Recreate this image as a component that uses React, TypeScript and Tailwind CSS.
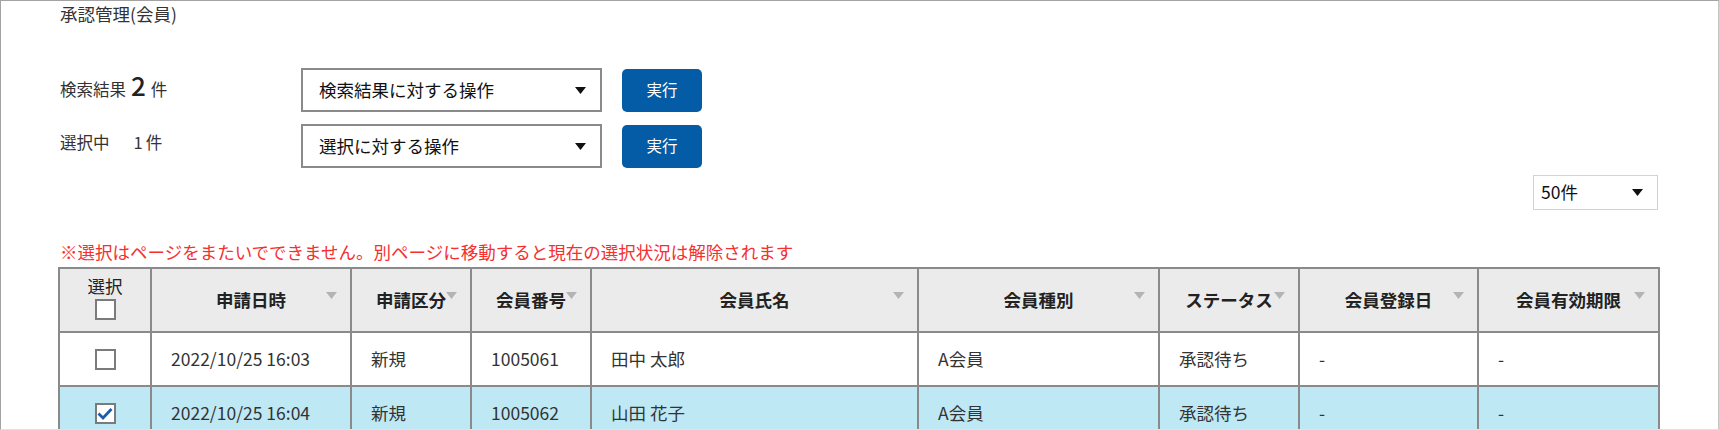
import React from "react";

const cols = [
  { key: "date", label: "申請日時", w: 200 },
  { key: "kind", label: "申請区分", w: 120 },
  { key: "no", label: "会員番号", w: 120 },
  { key: "name", label: "会員氏名", w: 327 },
  { key: "type", label: "会員種別", w: 241 },
  { key: "status", label: "ステータス", w: 140 },
  { key: "reg", label: "会員登録日", w: 179 },
  { key: "exp", label: "会員有効期限", w: 181 },
];

const rows = [
  {
    checked: false,
    date: "2022/10/25 16:03",
    kind: "新規",
    no: "1005061",
    name: "田中 太郎",
    type: "A会員",
    status: "承認待ち",
    reg: "-",
    exp: "-",
  },
  {
    checked: true,
    date: "2022/10/25 16:04",
    kind: "新規",
    no: "1005062",
    name: "山田 花子",
    type: "A会員",
    status: "承認待ち",
    reg: "-",
    exp: "-",
  },
];

function Caret({ className = "" }: { className?: string }) {
  return (
    <svg width="11" height="7" viewBox="0 0 11 7" className={className}>
      <polygon points="0,0 11,0 5.5,7" fill="currentColor" />
    </svg>
  );
}

function Checkbox({ checked }: { checked?: boolean }) {
  return (
    <span className="mx-auto flex h-[21px] w-[21px] items-center justify-center border-2 border-[#7b7b7b] bg-white">
      {checked && (
        <svg width="16" height="13" viewBox="0 0 16 13">
          <path d="M1.5 6.5 L6 11 L14.5 2" fill="none" stroke="#1d5da8" strokeWidth="2.8" />
        </svg>
      )}
    </span>
  );
}

function ActionRow({ label, placeholder }: { label: React.ReactNode; placeholder: string }) {
  return (
    <div className="flex items-center">
      <div className="w-[243px] pb-[8px] pl-[2px] text-[16.5px] leading-[24px]">{label}</div>
      <div className="flex h-[44px] w-[301px] items-center justify-between border-2 border-[#8a8a8a] pl-[16px] pr-[14px] text-[17.5px] text-[#111]">
        <span>{placeholder}</span>
        <Caret className="text-[#111]" />
      </div>
      <button className="ml-[20px] h-[43px] w-[80px] rounded-[5px] bg-[#045ca6] text-[15.5px] text-white">
        実行
      </button>
    </div>
  );
}

export default function App() {
  return (
    <div className="h-[430px] w-[1719px] overflow-hidden border-t border-l border-r border-b border-t-[#a3a3a3] border-l-[#a3a3a3] border-r-[#c4c4c4] border-b-[#e2e2e2] bg-white font-['Noto_Sans_CJK_JP','Noto_Sans',sans-serif] text-[#333]">
      <div className="w-[1657px] pl-[57px]">
        <h1 className="pl-[2px] pt-[1px] text-[17.5px] leading-[24px]">承認管理(会員)</h1>

        <div className="mt-[42px] flex flex-col gap-[12px]">
          <ActionRow
            label={
              <span>
                検索結果<span className="mx-[5px] text-[26px] font-medium leading-none text-[#222]">2</span>件
              </span>
            }
            placeholder="検索結果に対する操作"
          />
          <ActionRow
            label={
              <span>
                選択中<span className="ml-[24px] mr-[3px]">1</span>件
              </span>
            }
            placeholder="選択に対する操作"
          />
        </div>

        <div className="mt-[7px] flex justify-end">
          <div className="flex h-[35px] w-[125px] items-center justify-between border border-[#d3d3d3] pl-[7px] pr-[14px] text-[17.5px] text-[#111]">
            <span>50件</span>
            <Caret className="text-[#111]" />
          </div>
        </div>

        <p className="mt-[30px] pl-[2px] text-[17.5px] leading-[24px] text-[#f5302f]">
          ※選択はページをまたいでできません。別ページに移動すると現在の選択状況は解除されます
        </p>

        <table className="mt-[3px] w-[1600px] table-fixed border-collapse text-[17.5px]">
          <colgroup>
            <col style={{ width: 92 }} />
            {cols.map((c) => (
              <col key={c.key} style={{ width: c.w }} />
            ))}
          </colgroup>
          <thead>
            <tr className="h-[64px] bg-[#ebebeb]">
              <th className="border-2 border-[#8a8a8a] align-middle font-normal text-[#222]">
                <div className="-mt-[4px] flex flex-col items-center gap-[3px]">
                  <span className="leading-[20px]">選択</span>
                  <Checkbox />
                </div>
              </th>
              {cols.map((c) => (
                <th key={c.key} className="relative border-2 border-[#8a8a8a] text-center font-bold text-[#222]">
                  {c.label}
                  <Caret className="absolute right-[13px] top-[23px] text-[#b4b4b4]" />
                </th>
              ))}
            </tr>
          </thead>
          <tbody>
            {rows.map((r, i) => (
              <tr key={i} className={`h-[54px] ${r.checked ? "bg-[#bee8f4]" : "bg-white"}`}>
                <td className="border-2 border-[#8a8a8a] text-center">
                  <Checkbox checked={r.checked} />
                </td>
                {cols.map((c) => (
                  <td key={c.key} className="border-2 border-[#8a8a8a] px-[19px] text-left text-[#333]">
                    {r[c.key as keyof typeof r] as string}
                  </td>
                ))}
              </tr>
            ))}
          </tbody>
        </table>
      </div>
    </div>
  );
}
